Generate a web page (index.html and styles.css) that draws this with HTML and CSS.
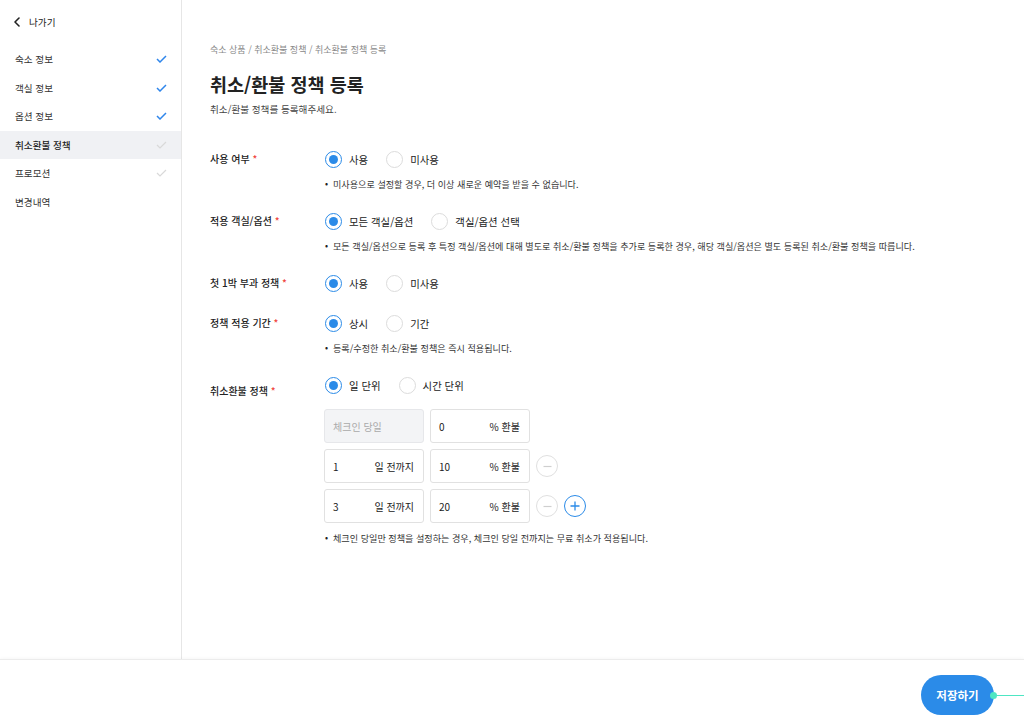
FILE: index.html
```html
<!DOCTYPE html>
<html lang="ko">
<head>
<meta charset="utf-8">
<title>취소/환불 정책 등록</title>
<link rel="stylesheet" href="styles.css">
</head>
<body>
<div class="app">
  <div class="body">
    <aside class="sidebar">
      <a class="back">
        <svg class="chev" width="8" height="10" viewBox="0 0 8 10"><path d="M6 1 L2 5 L6 9" fill="none" stroke="#222" stroke-width="1.6" stroke-linecap="round" stroke-linejoin="round"/></svg>
        <span>나가기</span>
      </a>
      <ul class="nav">
        <li class="nav-item"><span>숙소 정보</span><svg class="check done" width="11" height="8" viewBox="0 0 11 8"><path d="M1 4 L4 7 L10 1" fill="none" stroke-width="1.5"/></svg></li>
        <li class="nav-item"><span>객실 정보</span><svg class="check done" width="11" height="8" viewBox="0 0 11 8"><path d="M1 4 L4 7 L10 1" fill="none" stroke-width="1.5"/></svg></li>
        <li class="nav-item"><span>옵션 정보</span><svg class="check done" width="11" height="8" viewBox="0 0 11 8"><path d="M1 4 L4 7 L10 1" fill="none" stroke-width="1.5"/></svg></li>
        <li class="nav-item active"><span>취소환불 정책</span><svg class="check" width="11" height="8" viewBox="0 0 11 8"><path d="M1 4 L4 7 L10 1" fill="none" stroke-width="1.2"/></svg></li>
        <li class="nav-item"><span>프로모션</span><svg class="check" width="11" height="8" viewBox="0 0 11 8"><path d="M1 4 L4 7 L10 1" fill="none" stroke-width="1.2"/></svg></li>
        <li class="nav-item"><span>변경내역</span></li>
      </ul>
    </aside>
    <main class="content">
      <div class="breadcrumb">숙소 상품 / 취소환불 정책 / 취소환불 정책 등록</div>
      <h1 class="title">취소/환불 정책 등록</h1>
      <p class="subtitle">취소/환불 정책를 등록해주세요.</p>

      <div class="form">
        <div class="form-row">
          <div class="label">사용 여부 <span class="req">*</span></div>
          <div class="field">
            <div class="radios">
              <label class="radio checked"><span class="circle"></span><span>사용</span></label>
              <label class="radio"><span class="circle"></span><span>미사용</span></label>
            </div>
            <p class="note"><span class="dot">•</span>미사용으로 설정할 경우, 더 이상 새로운 예약을 받을 수 없습니다.</p>
          </div>
        </div>

        <div class="form-row">
          <div class="label">적용 객실/옵션 <span class="req">*</span></div>
          <div class="field">
            <div class="radios">
              <label class="radio checked"><span class="circle"></span><span>모든 객실/옵션</span></label>
              <label class="radio"><span class="circle"></span><span>객실/옵션 선택</span></label>
            </div>
            <p class="note"><span class="dot">•</span>모든 객실/옵션으로 등록 후 특정 객실/옵션에 대해 별도로 취소/환불 정책을 추가로 등록한 경우, 해당 객실/옵션은 별도 등록된 취소/환불 정책을 따릅니다.</p>
          </div>
        </div>

        <div class="form-row">
          <div class="label">첫 1박 부과 정책 <span class="req">*</span></div>
          <div class="field">
            <div class="radios">
              <label class="radio checked"><span class="circle"></span><span>사용</span></label>
              <label class="radio"><span class="circle"></span><span>미사용</span></label>
            </div>
          </div>
        </div>

        <div class="form-row">
          <div class="label">정책 적용 기간 <span class="req">*</span></div>
          <div class="field">
            <div class="radios">
              <label class="radio checked"><span class="circle"></span><span>상시</span></label>
              <label class="radio"><span class="circle"></span><span>기간</span></label>
            </div>
            <p class="note"><span class="dot">•</span>등록/수정한 취소/환불 정책은 즉시 적용됩니다.</p>
          </div>
        </div>

        <div class="form-row">
          <div class="label label-low">취소환불 정책 <span class="req">*</span></div>
          <div class="field">
            <div class="radios">
              <label class="radio checked"><span class="circle"></span><span>일 단위</span></label>
              <label class="radio"><span class="circle"></span><span>시간 단위</span></label>
            </div>
            <div class="rules">
              <div class="rule">
                <div class="box disabled"><span class="placeholder">체크인 당일</span></div>
                <div class="box"><span class="val">0</span><span class="suffix">% 환불</span></div>
              </div>
              <div class="rule">
                <div class="box"><span class="val">1</span><span class="suffix">일 전까지</span></div>
                <div class="box"><span class="val">10</span><span class="suffix">% 환불</span></div>
                <span class="round minus"><svg width="9" height="9" viewBox="0 0 9 9"><path d="M0.5 4.5 H8.5" stroke="#cfcfcf" stroke-width="1.2"/></svg></span>
              </div>
              <div class="rule">
                <div class="box"><span class="val">3</span><span class="suffix">일 전까지</span></div>
                <div class="box"><span class="val">20</span><span class="suffix">% 환불</span></div>
                <span class="round minus"><svg width="9" height="9" viewBox="0 0 9 9"><path d="M0.5 4.5 H8.5" stroke="#cfcfcf" stroke-width="1.2"/></svg></span>
                <span class="round plus"><svg width="10" height="10" viewBox="0 0 10 10"><path d="M0.5 5 H9.5 M5 0.5 V9.5" stroke="#2b8be8" stroke-width="1.3"/></svg></span>
              </div>
            </div>
            <p class="note"><span class="dot">•</span>체크인 당일만 정책을 설정하는 경우, 체크인 당일 전까지는 무료 취소가 적용됩니다.</p>
          </div>
        </div>
      </div>
    </main>
  </div>
  <footer class="footer">
    <button class="save">저장하기<span class="connector"></span></button>
  </footer>
</div>
</body>
</html>
```

FILE: styles.css
```css
* { box-sizing: border-box; }
html, body { margin: 0; padding: 0; }
body {
  font-family: "Noto Sans CJK KR", "Noto Sans", sans-serif;
  color: #222;
  background: #fff;
}
.app {
  width: 1024px;
  height: 725px;
  display: flex;
  flex-direction: column;
  overflow: hidden;
}
.body {
  flex: 1;
  display: flex;
  min-height: 0;
}
.sidebar {
  width: 182px;
  flex: none;
  border-right: 1px solid #e6e6e6;
  padding-top: 14px;
}
.back {
  display: flex;
  align-items: center;
  height: 16px;
  padding-left: 13px;
  font-size: 9.6px;
  color: #222;
  gap: 8px;
}
.back span { line-height: 16px; }
.nav {
  list-style: none;
  margin: 15px 0 0;
  padding: 0;
}
.nav-item {
  height: 28.5px;
  display: flex;
  align-items: center;
  justify-content: space-between;
  padding: 0 14px 0 15px;
  font-size: 9.6px;
  color: #333;
}
.nav-item.active {
  background: #f0f1f4;
  font-weight: 500;
  color: #222;
}
.check path { stroke: #d9d9d9; }
.check.done path { stroke: #2f86eb; }

.content {
  flex: 1;
  padding: 43px 28px 0;
}
.breadcrumb {
  font-size: 9px;
  line-height: 14px;
  color: #888;
}
.title {
  margin: 14px 0 0;
  font-size: 18.5px;
  line-height: 26px;
  font-weight: 700;
  color: #222;
}
.subtitle {
  margin: 5px 0 0;
  font-size: 9.6px;
  line-height: 14px;
  color: #444;
}
.form {
  margin-top: 33px;
  display: flex;
  flex-direction: column;
  gap: 20px;
}
.form-row {
  display: flex;
}
.label {
  width: 115px;
  flex: none;
  font-size: 10px;
  line-height: 20px;
  font-weight: 500;
  color: #222;
}
.label-low { padding-top: 6px; }
.req { color: #f0443c; }
.field { flex: 1; }
.radios {
  display: flex;
  align-items: center;
  height: 20px;
  gap: 18px;
}
.radio {
  display: flex;
  align-items: center;
  gap: 7px;
  font-size: 10.4px;
  color: #222;
}
.circle {
  width: 17px;
  height: 17px;
  border-radius: 50%;
  border: 1px solid #dcdcdc;
  background: #fff;
  display: flex;
  align-items: center;
  justify-content: center;
}
.radio.checked .circle {
  border: 1.6px solid #2b8be8;
}
.radio.checked .circle::after {
  content: "";
  width: 9px;
  height: 9px;
  border-radius: 50%;
  background: #2b8be8;
}
.note {
  margin: 8px 0 0;
  font-size: 9.1px;
  line-height: 14px;
  color: #333;
  display: flex;
}
.note .dot {
  width: 8px;
  flex: none;
  font-size: 9px;
  color: #222;
}
.rules {
  margin: 14px 0 0 -1px;
  display: flex;
  flex-direction: column;
  gap: 6px;
}
.rule {
  display: flex;
  align-items: center;
  gap: 6px;
}
.box {
  width: 100px;
  height: 34px;
  border: 1px solid #e1e1e1;
  border-radius: 3px;
  display: flex;
  align-items: center;
  justify-content: space-between;
  padding: 0 9px 0 8px;
  font-size: 10px;
  color: #222;
  background: #fff;
}
.box.disabled {
  background: #f3f4f6;
  border-color: #e6e7ea;
}
.placeholder { color: #aaa; }
.suffix { font-weight: 400; }
.round {
  width: 22px;
  height: 22px;
  border-radius: 50%;
  border: 1px solid #e0e0e0;
  display: flex;
  align-items: center;
  justify-content: center;
  background: #fff;
}
.round.plus { border-color: #2b8be8; }

.footer {
  height: 66px;
  flex: none;
  border-top: 1px solid #ececec;
  box-shadow: 0 -1px 3px rgba(0,0,0,0.03);
  display: flex;
  justify-content: flex-end;
  align-items: flex-start;
  padding: 15px 30px 0 0;
}
.save {
  position: relative;
  height: 40px;
  width: 73px;
  border: none;
  border-radius: 20px;
  background: #2b8be8;
  color: #fff;
  font-family: inherit;
  font-size: 11.5px;
  font-weight: 700;
  padding: 0;
}
.connector {
  position: absolute;
  left: 72px;
  top: 19.5px;
  width: 40px;
  height: 1px;
  background: #4ee6c3;
}
.connector::before {
  content: "";
  position: absolute;
  left: -3px;
  top: -3px;
  width: 7px;
  height: 7px;
  border-radius: 50%;
  background: #4ee6c3;
}
```
